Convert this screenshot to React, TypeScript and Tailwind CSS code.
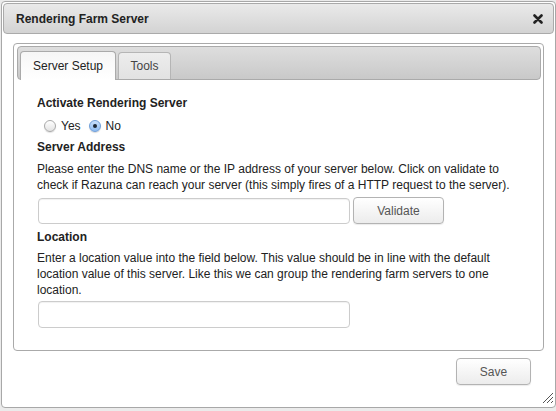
import React from 'react';

const font = { fontFamily: '"Liberation Sans", Arial, Helvetica, sans-serif' };

function Radio({ checked }: { checked?: boolean }) {
  if (checked) {
    return (
      <span className="flex h-[12px] w-[12px] items-center justify-center rounded-full border border-[#6f9ed8] bg-gradient-to-b from-[#c9e0fb] to-[#8fbdf2] shadow-[0_1px_1px_rgba(0,0,0,0.15)]">
        <span className="h-[4px] w-[4px] rounded-full bg-[#1d2733]" />
      </span>
    );
  }
  return (
    <span className="block h-[12px] w-[12px] rounded-full border border-[#a9a9a9] bg-gradient-to-b from-[#ffffff] to-[#e3e3e3] shadow-[0_1px_1px_rgba(0,0,0,0.12)]" />
  );
}

function GrayButton({ label, className }: { label: string; className: string }) {
  return (
    <button
      type="button"
      className={
        'flex items-center justify-center rounded-[4px] border border-[#b3b3b3] bg-gradient-to-b from-[#ffffff] to-[#ececec] text-[12px] text-[#555] shadow-[0_1px_1px_rgba(0,0,0,0.08)] ' +
        className
      }
    >
      {label}
    </button>
  );
}

export default function App() {
  return (
    <div className="h-[411px] w-[556px] bg-[#ebebeb] pl-[1px] pt-[1px]" style={font}>
      <div className="relative h-[407px] w-[555px] rounded-[4px] border border-[#a8a8a8] bg-white p-[1px]">
        {/* title bar */}
        <div className="flex h-[31px] items-center justify-between rounded-[4px] border border-[#aaaaaa] bg-gradient-to-b from-[#eaeaea] to-[#d3d3d3] pl-[12px] pr-[10px]">
          <span className="text-[12px] font-bold text-[#222]">Rendering Farm Server</span>
          <svg width="10" height="10" viewBox="0 0 10 10" className="mt-[1px]">
            <path d="M1.5 1.5 L8.5 8.5 M8.5 1.5 L1.5 8.5" stroke="#222" strokeWidth="2.6" strokeLinecap="round" />
          </svg>
        </div>

        {/* tabs panel */}
        <div className="ml-[10px] mt-[9px] h-[308px] w-[531px] rounded-[4px] border border-[#aaaaaa] pl-[3px] pr-[2px] pt-[2px]">
          <div className="flex h-[34px] items-end gap-[2px] rounded-[4px] border border-[#aaaaaa] bg-gradient-to-b from-[#dedede] to-[#c9c9c9] pl-[2px]">
            <div className="-mb-[1px] flex h-[29px] w-[96px] items-center justify-center rounded-t-[4px] border border-b-0 border-[#aaaaaa] bg-gradient-to-b from-[#f6f6f6] to-[#ffffff] text-[12px] text-[#222]">
              Server Setup
            </div>
            <div className="flex h-[27px] w-[53px] items-center justify-center rounded-t-[4px] border border-b-0 border-[#b5b5b5] bg-gradient-to-b from-[#ededed] to-[#e2e2e2] text-[12px] text-[#444]">
              Tools
            </div>
          </div>

          <div className="pl-[20px] pr-[20px] pt-[15px] text-[12px] leading-[16px] text-[#222]">
            <div className="font-bold">Activate Rendering Server</div>
            <div className="mt-[7px] flex items-center pl-[7px]">
              <Radio />
              <span className="ml-[5px]">Yes</span>
              <span className="ml-[8px]">
                <Radio checked />
              </span>
              <span className="ml-[5px]">No</span>
            </div>
            <div className="mt-[5px] font-bold">Server Address</div>
            <p className="mt-[6px]">
              Please enter the DNS name or the IP address of your server below. Click on validate to
              check if Razuna can reach your server (this simply fires of a HTTP request to the server).
            </p>
            <div className="mt-[4px] flex items-center gap-[3px] pl-[1px]">
              <input
                type="text"
                className="h-[26px] w-[312px] rounded-[4px] border border-[#cccccc] shadow-[inset_0_1px_1px_rgba(0,0,0,0.06)] outline-none"
              />
              <GrayButton label="Validate" className="h-[27px] w-[91px]" />
            </div>
            <div className="mt-[5px] font-bold">Location</div>
            <p className="mt-[5px]">
              Enter a location value into the field below. This value should be in line with the default
              location value of this server. Like this we can group the rendering farm servers to one
              location.
            </p>
            <div className="mt-[3px] pl-[1px]">
              <input
                type="text"
                className="h-[27px] w-[312px] rounded-[4px] border border-[#cccccc] shadow-[inset_0_1px_1px_rgba(0,0,0,0.06)] outline-none"
              />
            </div>
          </div>
        </div>

        {/* footer */}
        <div className="mr-[23px] mt-[7px] flex justify-end">
          <GrayButton label="Save" className="h-[27px] w-[75px]" />
        </div>

        {/* resize grip */}
        <svg width="12" height="12" viewBox="0 0 12 12" className="absolute bottom-[3px] right-[1px]">
          <path d="M11 1 L1 11 M11 5 L5 11 M11 9 L9 11" stroke="#555" strokeWidth="1" />
        </svg>
      </div>
    </div>
  );
}
